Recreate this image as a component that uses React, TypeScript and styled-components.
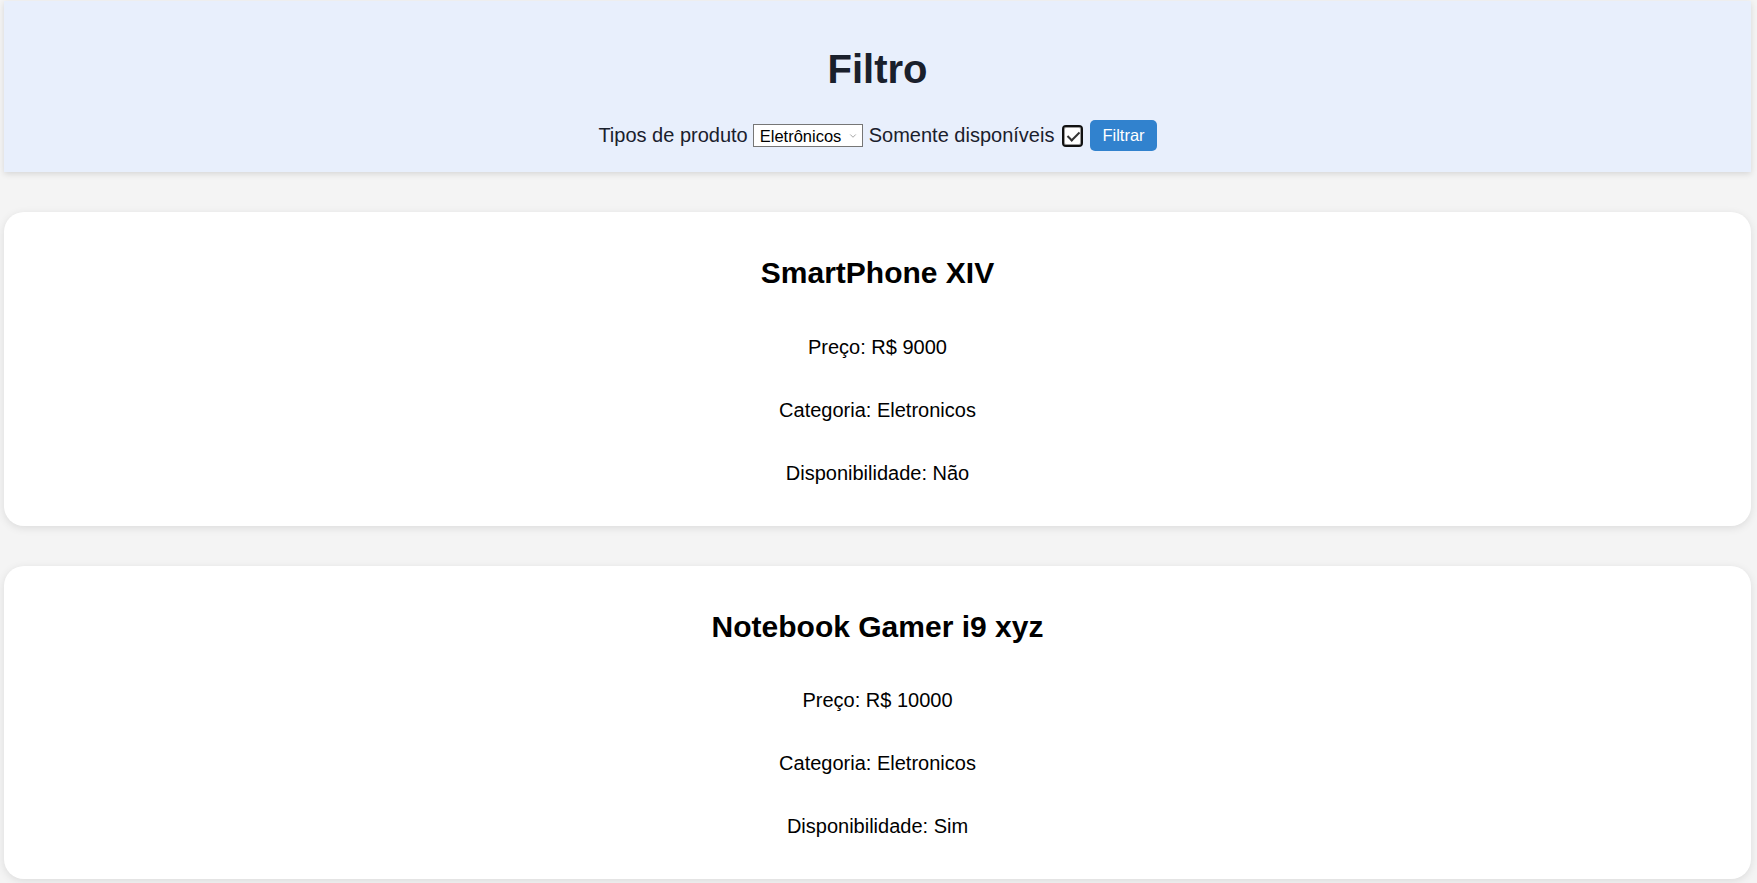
import React, { useState } from "react";
import styled, { createGlobalStyle } from "styled-components";
import { ChevronDown } from "lucide-react";

const GlobalStyle = createGlobalStyle`
  html, body {
    margin: 0;
    padding: 0;
    background: #f4f4f4;
    font-family: "Liberation Sans", Arial, sans-serif;
  }
`;

const Page = styled.div`
  display: flex;
  flex-direction: column;
  gap: 40px;
  padding: 1px 6px 40px 4px;
`;

const Header = styled.header`
  background: #e8effc;
  box-shadow: 0 2px 6px rgba(0, 0, 0, 0.12);
  padding: 20px 20px 21px;
  display: flex;
  flex-direction: column;
  align-items: center;
`;

const Title = styled.h1`
  margin: 25px 0 0;
  font-size: 40px;
  line-height: 46px;
  font-weight: bold;
  color: #1a202c;
`;

const FilterRow = styled.div`
  margin-top: 28px;
  display: flex;
  align-items: center;
  font-size: 20px;
  line-height: 23px;
  color: #1a202c;
`;

const SelectWrap = styled.div`
  position: relative;
  margin: 0 6px 0 5px;
`;

const Select = styled.select`
  appearance: none;
  width: 110px;
  height: 23px;
  box-sizing: border-box;
  border: 1px solid #767676;
  border-radius: 0;
  background: #fff;
  padding: 0 18px 0 6px;
  font-family: "Liberation Sans", Arial, sans-serif;
  font-size: 16.5px;
  color: #000;
  outline: none;
`;

const Chevron = styled(ChevronDown)`
  position: absolute;
  right: 5px;
  top: 7px;
  pointer-events: none;
  color: #6f6f6f;
`;

const Check = styled.input`
  appearance: none;
  margin: 0 7px 0 8px;
  width: 21px;
  height: 22px;
  box-sizing: border-box;
  border: 2px solid #111;
  border-radius: 4px;
  background: #fff;
  box-shadow: inset 0 0 0 1px #9a9a9a;
  position: relative;
  cursor: pointer;
  &:checked::after {
    content: "";
    position: absolute;
    left: 6px;
    top: 2px;
    width: 5px;
    height: 10px;
    border: solid #333;
    border-width: 0 2px 2px 0;
    transform: rotate(45deg);
  }
`;

const Button = styled.button`
  background: #3182ce;
  color: #fff;
  border: none;
  border-radius: 5px;
  padding: 6px 12px;
  font-family: "Liberation Sans", Arial, sans-serif;
  font-size: 16.5px;
  line-height: 19px;
  cursor: pointer;
`;

const Card = styled.section`
  background: #fff;
  border-radius: 20px;
  box-shadow: 0 2px 8px rgba(0, 0, 0, 0.1);
  padding: 19px 20px 21px;
  display: flex;
  flex-direction: column;
  align-items: center;
`;

const ProductName = styled.h2`
  margin: 25px 0;
  font-size: 30px;
  line-height: 34.5px;
  font-weight: bold;
  color: #000;
`;

const Info = styled.p`
  margin: 20px 0;
  font-size: 20px;
  line-height: 23px;
  color: #000;
`;

const produtos = [
  { nome: "SmartPhone XIV", preco: 9000, categoria: "Eletronicos", disponivel: false },
  { nome: "Notebook Gamer i9 xyz", preco: 10000, categoria: "Eletronicos", disponivel: true },
];

export default function App() {
  const [tipo, setTipo] = useState("eletronicos");
  const [somenteDisponiveis, setSomenteDisponiveis] = useState(true);

  return (
    <>
      <GlobalStyle />
      <Page>
        <Header>
          <Title>Filtro</Title>
          <FilterRow>
            <span>Tipos de produto</span>
            <SelectWrap>
              <Select value={tipo} onChange={(e) => setTipo(e.target.value)}>
                <option value="eletronicos">Eletrônicos</option>
                <option value="roupas">Roupas</option>
                <option value="livros">Livros</option>
              </Select>
              <Chevron size={10} strokeWidth={1.5} />
            </SelectWrap>
            <span>Somente disponíveis</span>
            <Check
              type="checkbox"
              checked={somenteDisponiveis}
              onChange={(e) => setSomenteDisponiveis(e.target.checked)}
            />
            <Button type="button">Filtrar</Button>
          </FilterRow>
        </Header>
        {produtos.map((p) => (
          <Card key={p.nome}>
            <ProductName>{p.nome}</ProductName>
            <Info>Preço: R$ {p.preco}</Info>
            <Info>Categoria: {p.categoria}</Info>
            <Info>Disponibilidade: {p.disponivel ? "Sim" : "Não"}</Info>
          </Card>
        ))}
      </Page>
    </>
  );
}
